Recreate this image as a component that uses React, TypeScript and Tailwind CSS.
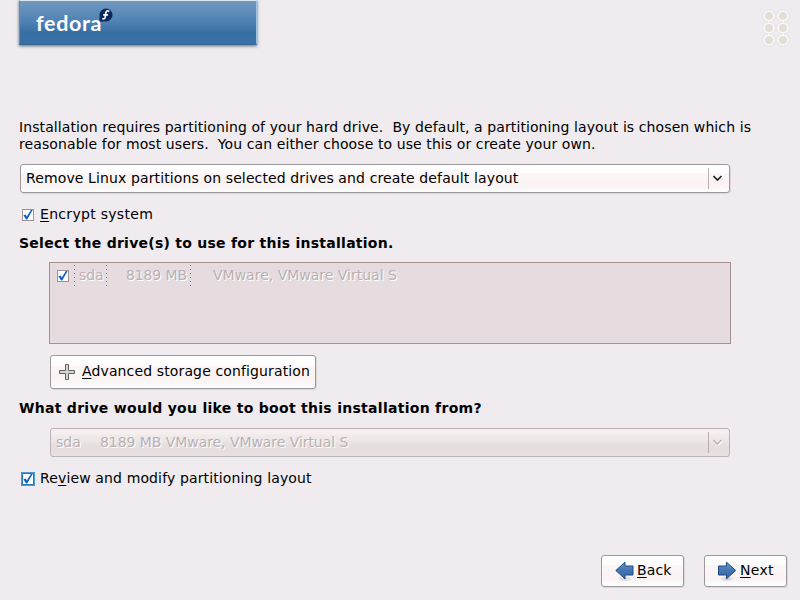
import React from "react";

function Check({ focused = false }: { focused?: boolean }) {
  return (
    <svg width="14" height="14" viewBox="0 0 14 14" className="block shrink-0" shapeRendering="auto">
      {focused && <rect x="0.5" y="0.5" width="13" height="13" fill="none" stroke="#4a9ad0" />}
      <rect x="1.5" y="1.5" width="11" height="11" fill="#fff" stroke={focused ? "#2a7cb8" : "#a09294"} />
      <path d="M2.4 7.2 L4.6 6.4 L5.8 8.6 L9.9 2 L11.8 1.8 L6.2 11.6 L5 11.6 Z" fill="#0b62cf" />
    </svg>
  );
}

function Chevron({ disabled = false }: { disabled?: boolean }) {
  return (
    <svg width="10" height="7" viewBox="0 0 10 7" className="block">
      {disabled && <path d="M1.5 2 L5.5 6 L9.5 2" fill="none" stroke="#fff" strokeWidth="1.2" />}
      <path
        d="M0.5 1 L4.5 5 L8.5 1"
        fill="none"
        stroke={disabled ? "#b9b0b2" : "#222"}
        strokeWidth={disabled ? 1.3 : 1.6}
      />
    </svg>
  );
}

function Arrow({ flip = false }: { flip?: boolean }) {
  return (
    <svg width="20" height="22" viewBox="0 0 20 22" className="block shrink-0">
      <defs>
        <linearGradient id={flip ? "arrowL" : "arrowR"} x1="0" y1="0" x2="0" y2="1">
          <stop offset="0" stopColor="#6a96c8" />
          <stop offset="0.5" stopColor="#4475b3" />
          <stop offset="1" stopColor="#3767a5" />
        </linearGradient>
        <radialGradient id={flip ? "shadeL" : "shadeR"}>
          <stop offset="0" stopColor="#8c8088" stopOpacity="0.4" />
          <stop offset="1" stopColor="#8c8088" stopOpacity="0" />
        </radialGradient>
      </defs>
      <ellipse cx="10" cy="18.8" rx="8" ry="3" fill={flip ? "url(#shadeL)" : "url(#shadeR)"} />
      <path
        transform={flip ? "translate(19.5 0.5) scale(-1 1)" : "translate(0 0.5)"}
        d="M1.5 5.5 H9.5 V1.7 L18.7 10 L9.5 18.3 V14.5 H1.5 Z"
        fill={flip ? "url(#arrowL)" : "url(#arrowR)"}
        stroke="#204a87"
      />
    </svg>
  );
}

const button =
  "flex items-center rounded-[3px] border border-[#9d989c] bg-[linear-gradient(#fff_0%,#fefdfd_30%,#fbf6f6_32%,#fcf3f2_70%,#f9f7f8_85%,#fff_100%)] shadow-[1px_1px_0_#dcd7db]";

export default function App() {
  return (
    <div className="h-[600px] w-[800px] overflow-hidden bg-[#efebee] font-['DejaVu_Sans',sans-serif] text-[14px] leading-[17px] text-black">
      <header className="flex h-[119px] items-start justify-between pl-[19px] pr-[11px]">
        <div className="flex h-[45px] w-[238px] border-x border-b-2 border-b-[#3c6a96] border-l-[#5f90bd] border-r-[#9cc4e0] border-t border-t-[#dce6ee] bg-[linear-gradient(#7199c1_0%,#4f81b3_50%,#376fa5_75%,#386fa7_100%)] pl-[16px] pt-[6px] shadow-[0_1px_3px_#53677c]">
          <span className="mt-px h-[30px] w-[64px] whitespace-nowrap font-['Lato',sans-serif] text-[21.5px] font-bold leading-[30px] tracking-[0.65px] text-white">
            fedora
          </span>
          <svg width="14" height="14" viewBox="0 0 14 14" className="-ml-px mt-px block">
            <path d="M7 .5 A6.5 6.5 0 1 1 7 13.5 H1.7 Q.5 13.5 .5 12.3 V7 A6.5 6.5 0 0 1 7 .5Z" fill="#09285c" />
            <path d="M10.3 3.5 Q7.3 1.8 6.8 5 L6.1 9.4 Q5.5 11.5 3.3 10.5 M4.2 6.9 H9" fill="none" stroke="#fff" strokeWidth="1.7" />
          </svg>
        </div>
        <div className="mt-[10px] grid grid-cols-2 gap-x-[2px]">
          {[0, 1, 2, 3, 4, 5].map((i) => (
            <i key={i} className="block size-[12px] rounded-full border-2 border-[#faf7f9] bg-[#e3ded6] shadow-[0_0_1px_#c4bac8]" />
          ))}
        </div>
      </header>

      <main className="h-[436px] pl-[19px]">
        <p className="h-[45px] whitespace-pre tracking-[0.097px]">
          {"Installation requires partitioning of your hard drive.  By default, a partitioning layout is chosen which is\nreasonable for most users.  You can either choose to use this or create your own."}
        </p>
        <div className={`${button} ml-px h-[29px] w-[710px] pl-[5px]`}>
          <span className="grow whitespace-pre tracking-[0.12px]">Remove Linux partitions on selected drives and create default layout</span>
          <div className="mr-px flex h-[21px] w-[20px] items-center border-l border-[#b8b1b5] pl-[4px]"><Chevron /></div>
        </div>
        <label className="mt-[13px] flex h-[17px] items-center gap-[5px] pl-[2px]">
          <Check />
          <span className="tracking-[0.3px]"><u className="underline-offset-2">E</u>ncrypt system</span>
        </label>
        <h2 className="mt-[12px] h-[17px] whitespace-pre font-bold tracking-[0.26px]">Select the drive(s) to use for this installation.</h2>
        <div className="ml-[30px] mt-[10px] h-[82px] w-[682px] border border-[#a3928f] bg-[#e6dbdf] text-[#b9b0b3] [text-shadow:1px_1px_0_#fff]">
          <div className="flex h-[25px] items-center pl-[6px]">
            <Check />
            <i className="ml-[4px] h-[22px] w-px bg-[repeating-linear-gradient(#85797d_0_1px,transparent_1px_4px)]" />
            <span className="ml-[4px] w-[27px] whitespace-nowrap tracking-[-0.15px]">sda</span>
            <i className="h-[22px] w-px bg-[repeating-linear-gradient(#85797d_0_1px,transparent_1px_4px)]" />
            <span className="ml-[19px] w-[64px] whitespace-nowrap tracking-[-0.12px]">8189 MB</span>
            <i className="h-[22px] w-px bg-[repeating-linear-gradient(#85797d_0_1px,transparent_1px_4px)]" />
            <span className="ml-[22px] whitespace-nowrap">VMware, VMware Virtual S</span>
          </div>
        </div>
        <button className={`${button} ml-[31px] mt-[11px] h-[34px] w-[266px] pl-[8px]`}>
          <svg width="16" height="16" viewBox="0 0 16 16" className="mr-[7px] block shrink-0">
            <path d="M6.5 .5 H9.5 V6.5 H15.5 V9.5 H9.5 V15.5 H6.5 V9.5 H.5 V6.5 H6.5Z" fill="#d3d7cf" stroke="#62655f" />
          </svg>
          <span className="whitespace-nowrap pb-px tracking-[0.13px]"><u className="underline-offset-2">A</u>dvanced storage configuration</span>
        </button>
        <h2 className="mt-[11px] h-[17px] whitespace-pre font-bold tracking-[0.285px]">What drive would you like to boot this installation from?</h2>
        <div className="ml-[31px] mt-[11px] flex h-[29px] w-[680px] items-center rounded-[3px] border border-[#bdb2b6] bg-[linear-gradient(#f7eeef_0_15%,#eeebed_25%,#ede6e4_45%,#e6dfe1_60%,#e6dedc_80%,#e5e2e5_100%)] pl-[5px] text-[#b9b0b3] [text-shadow:1px_1px_0_#fff]">
          <span className="w-[44px]">sda</span>
          <span className="grow tracking-[-0.06px]">8189 MB VMware, VMware Virtual S</span>
          <div className="mr-px flex h-[21px] w-[20px] items-center border-l border-[#b8adb1] pl-[4px]"><Chevron disabled /></div>
        </div>
        <label className="mt-[13px] flex h-[17px] items-center gap-[5px] pl-[2px]">
          <Check focused />
          <span className="tracking-[0.13px]">Re<u className="underline-offset-2">v</u>iew and modify partitioning layout</span>
        </label>
      </main>

      <footer className="flex justify-end gap-[20px] pr-[13px]">
        <button className={`${button} h-[32px] w-[83px] pl-[13px]`}>
          <Arrow flip />
          <span className="ml-[2px] pb-[2px] tracking-[0.15px]"><u className="underline-offset-2">B</u>ack</span>
        </button>
        <button className={`${button} h-[32px] w-[83px] pl-[12px]`}>
          <Arrow />
          <span className="ml-[3px] pb-[2px] tracking-[0.3px]"><u className="underline-offset-2">N</u>ext</span>
        </button>
      </footer>
    </div>
  );
}
